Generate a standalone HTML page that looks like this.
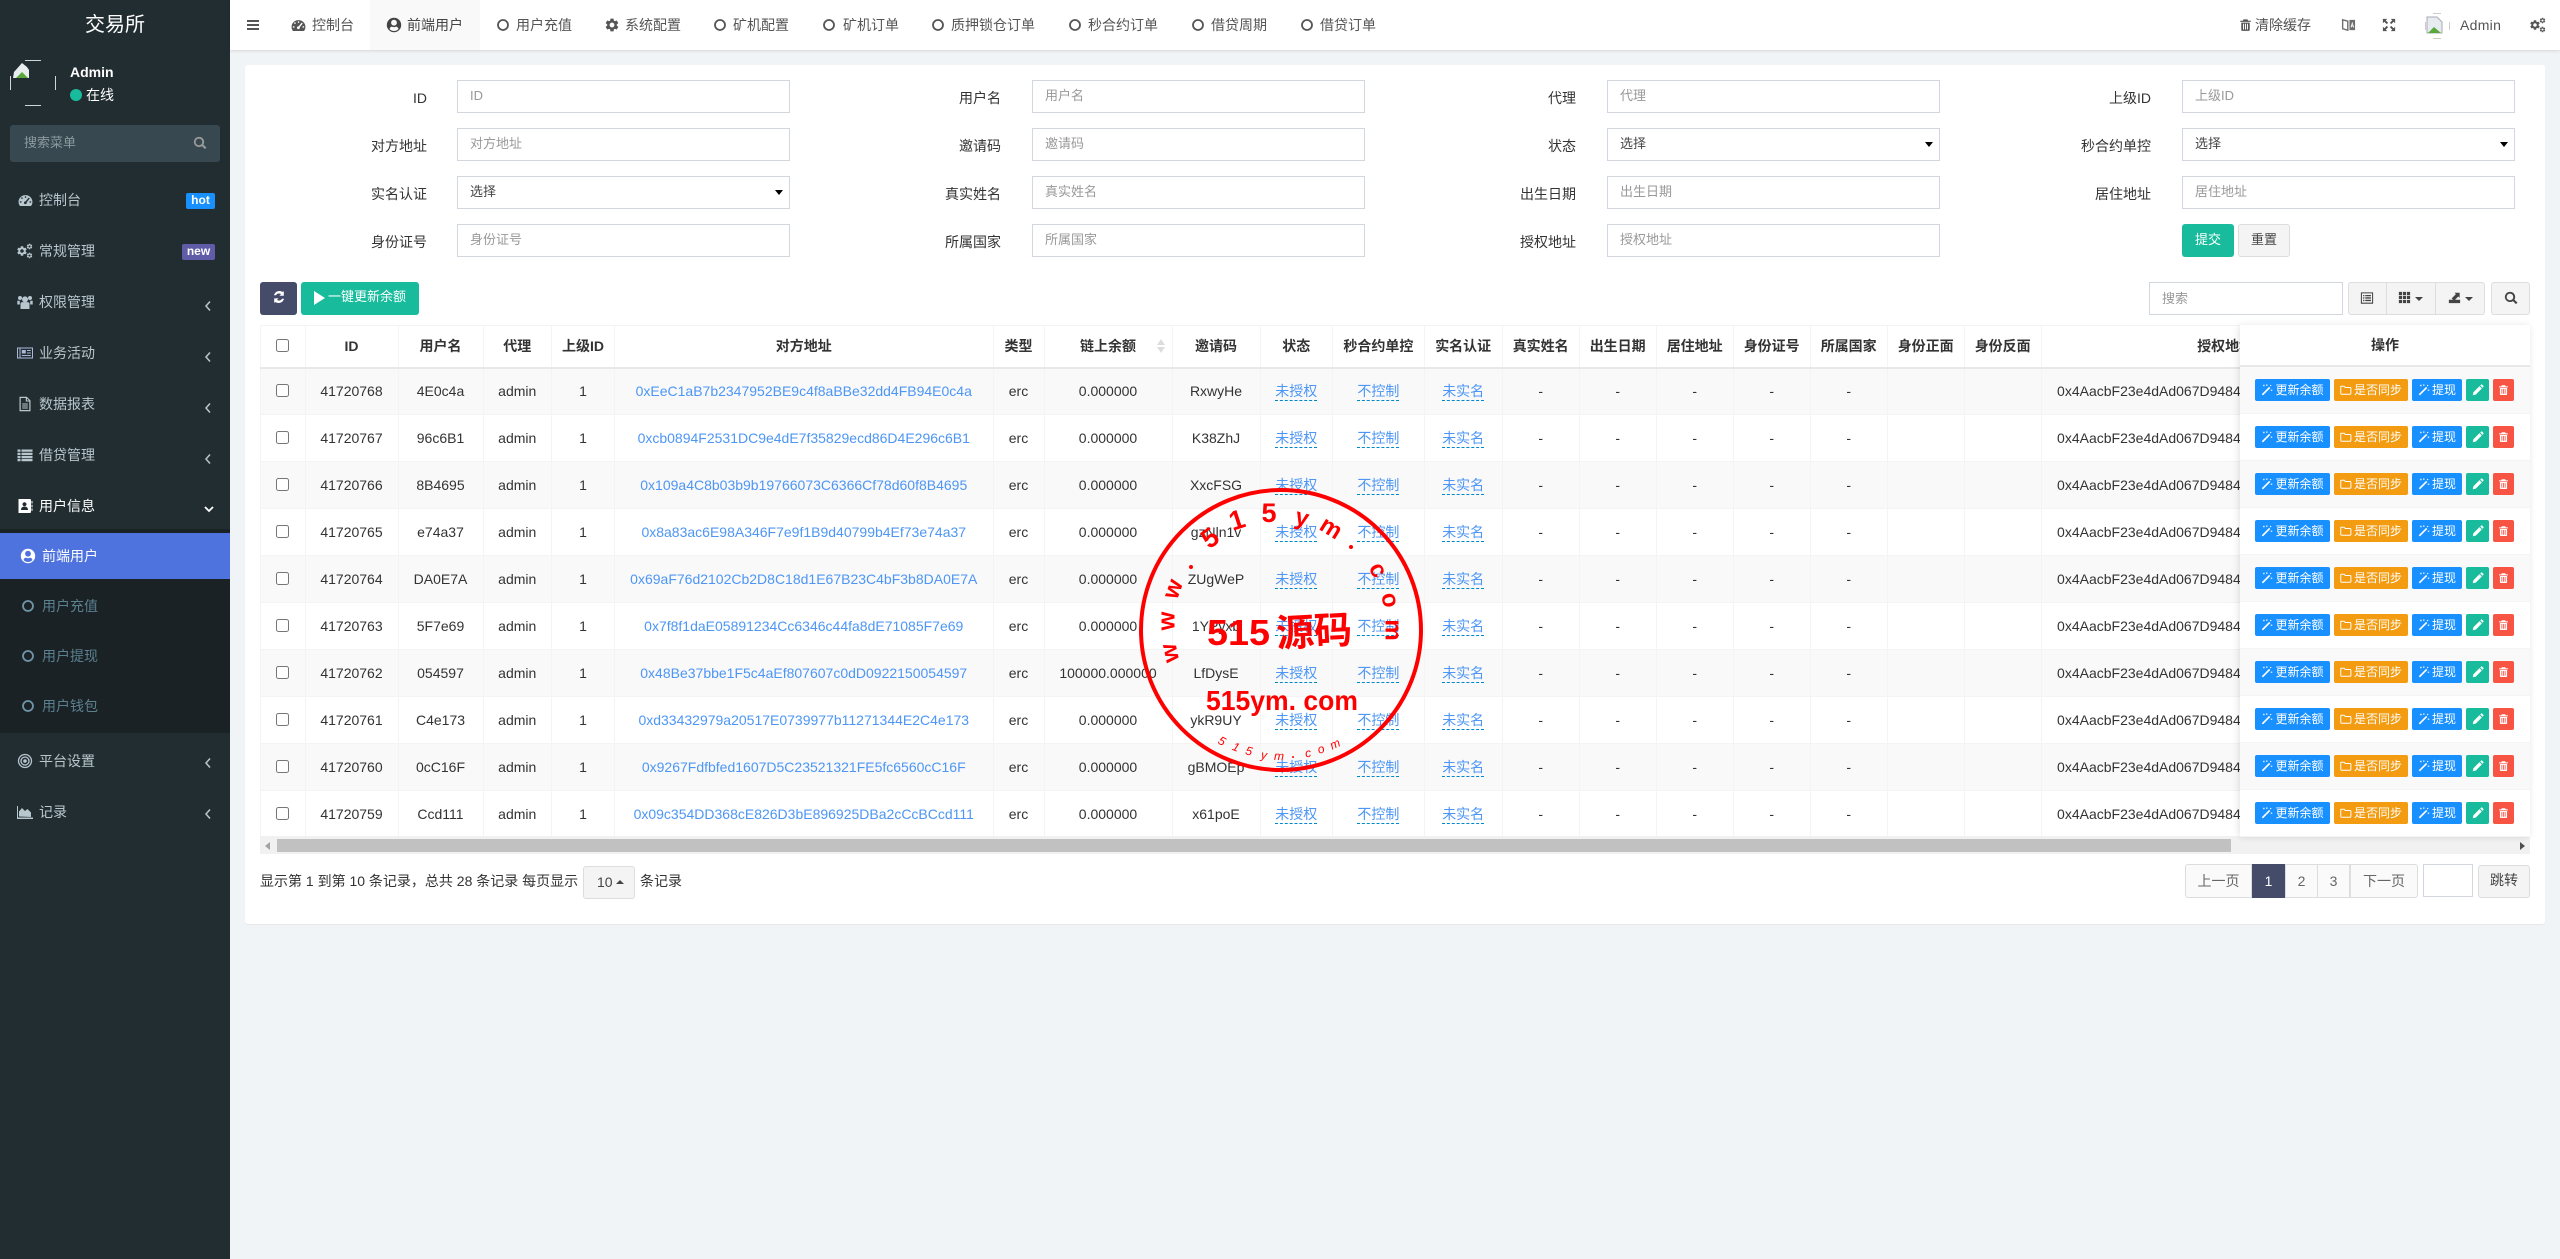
<!DOCTYPE html>
<html><head><meta charset="utf-8"><title>交易所</title>
<style>
*{box-sizing:border-box}
html,body{margin:0;padding:0}
body{width:2560px;height:1259px;overflow:hidden;position:relative;background:#f1f4f6;font:14px/20px "Liberation Sans","Noto Sans CJK SC",sans-serif;color:#333}
.a{position:absolute;white-space:nowrap}
svg{fill:currentColor;display:block}
.ic{position:absolute}
#side{position:absolute;left:0;top:0;width:230px;height:1259px;background:#222d32;color:#b8c7ce}
.mi{position:absolute;left:39px;line-height:20px;white-space:nowrap}
.tab{position:absolute;top:15px;line-height:20px;color:#555;white-space:nowrap}
.lb{position:absolute;width:200px;text-align:right;line-height:20px;color:#333}
.in{position:absolute;height:33px;border:1px solid #d2d6de;background:#fff;padding-left:12px;font-size:13px;line-height:29px;color:#999;white-space:nowrap}
.in.s{color:#444}
.in.s:after{content:"";position:absolute;right:6px;top:13px;border:4px solid transparent;border-top:5px solid #000;border-bottom:0}
#t{position:absolute;left:260px;top:325px;width:2270px;height:511px;overflow:hidden}
table{border-collapse:collapse;table-layout:fixed;width:2438.7px}
th,td{border:1px solid #f4f4f4;text-align:center;padding:0;white-space:nowrap;overflow:hidden;font-weight:400;height:47px;color:#333}
th{height:42px;font-weight:700;border-bottom:2px solid #e8e8e8;background:#fff}
tr:nth-child(odd) td{background:#f9f9f9}
tr:nth-child(even) td{background:#fff}
td.ad{color:#4d96f5}
td u{color:#4d96f5;text-decoration:none;border-bottom:1px dashed #0088cc;padding-bottom:1px}
input[type=checkbox]{margin:0;width:13px;height:13px;vertical-align:middle;position:relative;top:-2px}
#fx{position:absolute;left:2240px;top:325px;width:290px;height:511px;background:#fff;box-shadow:-2px 0 8px rgba(0,0,0,.08),0 2px 6px rgba(0,0,0,.05)}
#fx .h{height:42px;border-bottom:2px solid #e8e8e8;text-align:center;font-weight:700;line-height:41px}
#fx .r{height:47px;border-bottom:1px solid #f4f4f4;position:relative;background:#fff}
#fx .r:nth-child(even){background:#f9f9f9}
.b{position:absolute;top:12px;height:22px;border-radius:2px;color:#fff;font-size:12px;line-height:22px;display:flex;align-items:center;justify-content:center;white-space:nowrap}
.b svg{margin-right:2px}
.b1{left:15px;width:75px;background:#1890ff}
.b2{left:94px;width:74px;background:#f39c12}
.b3{left:172px;width:50px;background:#1890ff}
.b4{left:226px;width:23px;background:#18bc9c}
.b5{left:253px;width:21px;background:#f75444}
.b4 svg,.b5 svg{margin:0}
.btn{position:absolute;border:1px solid #ddd;border-radius:3px;background:#f4f4f4;color:#444;text-align:center}
.pg{position:absolute;top:864px;height:34px;border:1px solid #ddd;background:#fafafa;color:#666;text-align:center;line-height:32px;margin-left:-1px}
</style></head><body>
<svg width="0" height="0" style="position:absolute"><defs>
<symbol id="gear" viewBox="0 0 24 24"><path d="M19.14 12.94c.04-.3.06-.61.06-.94 0-.32-.02-.64-.07-.94l2.03-1.58c.18-.14.23-.41.12-.61l-1.92-3.32c-.12-.22-.37-.29-.59-.22l-2.39.96c-.5-.38-1.03-.7-1.62-.94l-.36-2.54c-.04-.24-.24-.41-.48-.41h-3.84c-.24 0-.43.17-.47.41l-.36 2.54c-.59.24-1.13.57-1.62.94l-2.39-.96c-.22-.08-.47 0-.59.22L2.74 8.87c-.12.21-.08.47.12.61l2.03 1.58c-.05.3-.09.63-.09.94s.02.64.07.94l-2.03 1.58c-.18.14-.23.41-.12.61l1.92 3.32c.12.22.37.29.59.22l2.39-.96c.5.38 1.03.7 1.62.94l.36 2.54c.05.24.24.41.48.41h3.84c.24 0 .44-.17.47-.41l.36-2.54c.59-.24 1.13-.56 1.62-.94l2.39.96c.22.08.47 0 .59-.22l1.92-3.32c.12-.22.07-.47-.12-.61l-2.01-1.58zM12 15.6c-1.98 0-3.6-1.62-3.6-3.6s1.62-3.6 3.6-3.6 3.6 1.62 3.6 3.6-1.62 3.6-3.6 3.6z"/></symbol>
<symbol id="dash" viewBox="0 0 16 16"><path fill-rule="evenodd" d="M8 2.2C3.8 2.2.6 5.4.6 9.4c0 1.6.5 3 1.3 4.2.2.2.4.3.7.3h10.8c.3 0 .5-.1.7-.3.8-1.2 1.3-2.6 1.3-4.2 0-4-3.2-7.2-7.4-7.2zM7.3 3.6h1.4v1.6H7.3zM3.2 5.2l1.2-.8.9 1.3-1.2.8zM2 8.8h1.7v1.4H2zM12.3 8.8H14v1.4h-1.7zM11.5 4.8l1 1-3.2 4.1a1.5 1.5 0 1 1-1.2-1z"/></symbol>
<symbol id="cogs" viewBox="0 0 16 16"><use href="#gear" x="-1" y="2" width="12" height="12"/><use href="#gear" x="9" y="0" width="7" height="7"/><use href="#gear" x="9" y="9" width="7" height="7"/></symbol>
<symbol id="users" viewBox="0 0 16 16"><circle cx="8" cy="5.4" r="3"/><circle cx="3" cy="4" r="2"/><circle cx="13" cy="4" r="2"/><path d="M3.5 9.5c0-1 1-1.4 2-1.4h5c1 0 2 .4 2 1.4V15h-9zM.3 6.800h2.500v3.700H.3zM13.200 6.800h2.500v3.700h-2.500z"/></symbol>
<symbol id="news" viewBox="0 0 16 16"><path fill-rule="evenodd" d="M0 2.500h16v11H0zM1 3.500v9h1.500v-9zM3.500 3.500v9H15v-9zM4.800 5h4v3.500h-4zM10 5h3.800v1H10zM10 7.500h3.800v1H10zM4.800 10h9v1h-9z"/></symbol>
<symbol id="file" viewBox="0 0 16 16"><path fill-rule="evenodd" d="M2.500.8h7.300l3.700 3.700v10.700H2.500zM3.700 2v12h8.600V5.500H8.800V2zM10 2.500v2h2zM5.200 7.500h5.600v1H5.200zM5.200 9.500h5.600v1H5.200zM5.200 11.500h5.600v1H5.200z"/></symbol>
<symbol id="list" viewBox="0 0 16 16"><path d="M.5 2.500h3v2.300h-3zM4.500 2.500h11v2.300h-11zM.5 5.700h3V8h-3zM4.500 5.700h11V8h-11zM.5 8.900h3v2.300h-3zM4.500 8.900h11v2.300h-11zM.5 12h3v2.300h-3zM4.500 12h11v2.300h-11z"/></symbol>
<symbol id="book" viewBox="0 0 16 16"><path fill-rule="evenodd" d="M1.500 1h11.500c.6 0 1 .4 1 1v12c0 .6-.4 1-1 1H1.500zM7.500 4.300a2 2 0 1 0 .01 0zM4 12h7c0-2-1-3.400-3.500-3.400S4 10 4 12z"/><path d="M14.500 3h1v2.500h-1zM14.500 6.700h1v2.500h-1zM14.500 10.400h1v2.500h-1z"/></symbol>
<symbol id="ucirc" viewBox="0 0 16 16"><path fill-rule="evenodd" d="M8 .8a7.200 7.200 0 1 0 0 14.400A7.200 7.200 0 0 0 8 .8zM8 2.800a2.900 2.900 0 1 1-.01 5.800A2.900 2.900 0 0 1 8 2.800zM8 14a6 6 0 0 1-4.500-2c.5-1.500 1.500-2.500 2.500-2.400.6.300 1.200.5 2 .5s1.400-.2 2-.5c1 0 2 .9 2.500 2.400A6 6 0 0 1 8 14z"/></symbol>
<symbol id="ring" viewBox="0 0 16 16"><circle cx="8" cy="8" r="5" fill="none" stroke="currentColor" stroke-width="1.800"/></symbol>
<symbol id="eye" viewBox="0 0 16 16"><circle cx="8" cy="8" r="6.500" fill="none" stroke="currentColor" stroke-width="1.300"/><circle cx="8" cy="8" r="4" fill="none" stroke="currentColor" stroke-width="1.300"/><circle cx="8" cy="8" r="1.800"/></symbol>
<symbol id="area" viewBox="0 0 16 16"><path d="M0 2h1v11.500h15V15H0zM2 12.500V7.500l3-3.500 3 3 2.500-2 3.500 3.500v4.500z"/></symbol>
<symbol id="search" viewBox="0 0 16 16"><path fill-rule="evenodd" d="M6.800 1a5.800 5.800 0 1 0 3.400 10.500l3.500 3.500 1.700-1.700-3.500-3.500A5.800 5.800 0 0 0 6.800 1zM6.800 3a3.800 3.800 0 1 1 0 7.600 3.800 3.800 0 0 1 0-7.600z"/></symbol>
<symbol id="trash" viewBox="0 0 16 16"><path fill-rule="evenodd" d="M5.500 1h5l.8 1.700H14.500v1.500h-13V2.700h3.200zM2.800 5h10.400v9c0 .7-.5 1.200-1.100 1.200H3.900c-.6 0-1.100-.5-1.100-1.200zM5 6.500v7h1.200v-7zM7.400 6.500v7h1.200v-7zM9.800 6.500v7H11v-7z"/></symbol>
<symbol id="magic" viewBox="0 0 16 16"><path d="M1 13.600 10.800 3.800l1.600 1.600L2.600 15.200zM3 1h1.700v2H3zM7 .5h1.500v2H7zM13 7.500h2V9h-2zM12.500 1 14 1.800l-1 1.400-1.200-1z"/></symbol>
<symbol id="folder" viewBox="0 0 16 16"><path fill="none" stroke="currentColor" stroke-width="1.300" d="M1.500 3h4l1.500 1.600h6.500c.6 0 1 .4 1 1v7c0 .6-.4 1-1 1h-11.500c-.6 0-1-.4-1-1V3.600c0-.4.2-.6.500-.6z"/></symbol>
<symbol id="pencil" viewBox="0 0 16 16"><path d="M1 15l.9-4 8.100-8.100 3.100 3.100L5 14.100zM11 2l1.200-1.200c.4-.3.9-.3 1.300 0l1.700 1.700c.3.400.3.900 0 1.300L14 5z"/></symbol>
<symbol id="expand" viewBox="0 0 16 16"><path d="M1 1h5L4.300 2.700 7 5.400 5.400 7 2.700 4.300 1 6zM15 1v5l-1.700-1.700L10.600 7 9 5.400 11.700 2.700 10 1zM1 15v-5l1.700 1.700L5.400 9 7 10.600 4.300 13.300 6 15zM15 15h-5l1.700-1.700L9 10.600 10.600 9l2.700 2.700L15 10z"/></symbol>
<symbol id="lang" viewBox="0 0 16 16"><path fill-rule="evenodd" d="M1 2l7 1.800V15L1 13zM2.500 4v8l4 1V5zM9 3h6v11H9zM12 5l-1.800 6h1.100l.3-1h1l.3 1H14zM11.800 9l.3-1.500.3 1.500z" opacity=".85"/></symbol>
<symbol id="refresh" viewBox="0 0 16 16"><path d="M13.500 1.500v5h-5l1.800-1.800A4 4 0 0 0 4.500 6H2.300a6.200 6.200 0 0 1 9.500-3.800zM2.500 14.500v-5h5l-1.800 1.800a4 4 0 0 0 5.800-1.300h2.200a6.200 6.200 0 0 1-9.500 3.800z"/></symbol>
<symbol id="listalt" viewBox="0 0 16 16"><path fill-rule="evenodd" d="M1 1.500h14v13H1zM2.200 2.700v10.600h11.600V2.700zM3.500 4.500h1.500V6H3.500zM6 4.500h6.500V6H6zM3.500 7.200h1.500v1.500H3.500zM6 7.200h6.500v1.500H6zM3.500 10h1.500v1.500H3.500zM6 10h6.500v1.500H6z"/></symbol>
<symbol id="th" viewBox="0 0 16 16"><path d="M2 2h3.400v3.400H2zM6.300 2h3.400v3.400H6.300zM10.600 2H14v3.400h-3.400zM2 6.300h3.400v3.400H2zM6.300 6.300h3.400v3.400H6.300zM10.600 6.300H14v3.400h-3.400zM2 10.600h3.400V14H2zM6.300 10.600h3.400V14H6.300zM10.600 10.600H14V14h-3.400z"/></symbol>
<symbol id="dl" viewBox="0 0 16 16"><path d="M2 11.500h12V15H2zM5 10l4.500-4.500L8 4h5.500v5.500L12 8l-4.500 4.500z"/></symbol>
<symbol id="left" viewBox="0 0 8 12"><path d="M6 1.500 2 6l4 4.500" fill="none" stroke="currentColor" stroke-width="1.500"/></symbol>
</defs></svg>

<div id="side">
<div class="a" style="left:0;width:230px;text-align:center;top:13px;font-size:20px;line-height:24px;color:#fff">交易所</div>
<svg class="ic" style="left:10px;top:60px" width="46" height="46" viewBox="0 0 46 46"><path d="M15 .5h16M15 45.500h16M.5 16v14M45.500 16v14" fill="none" stroke="#cfd6da" stroke-width="1"/><path d="M3 18 4 12 12 3 17 7 19 10 19 18z" fill="#e8edef"/><path d="M6 18l6-6 6 6z" fill="#5aa83c"/></svg>
<div class="a" style="left:70px;top:62px;font-weight:700;color:#fff">Admin</div>
<div class="a" style="left:70px;top:89px;width:12px;height:12px;border-radius:50%;background:#18bc9c"></div>
<div class="a" style="left:86px;top:85px;color:#fff">在线</div>
<div class="a" style="left:10px;top:125px;width:210px;height:37px;background:#374850;border-radius:3px;padding-left:14px;line-height:35px;font-size:13px;color:#8c9a9f">搜索菜单</div>
<svg class="ic" style="left:193px;top:136px;color:#999" width="14" height="14"><use href="#search"/></svg>

<svg class="ic" style="left:18px;top:193px" width="15" height="15"><use href="#dash"/></svg><div class="mi" style="top:190px">控制台</div>
<div class="a" style="left:186px;top:193px;width:29px;height:16px;background:#1890ff;border-radius:2px;color:#fff;font-size:12px;font-weight:700;text-align:center;line-height:15px">hot</div>
<svg class="ic" style="left:17px;top:243px" width="16" height="16"><use href="#cogs"/></svg><div class="mi" style="top:241px">常规管理</div>
<div class="a" style="left:182px;top:244px;width:33px;height:16px;background:#605ca8;border-radius:2px;color:#fff;font-size:12px;font-weight:700;text-align:center;line-height:15px">new</div>
<svg class="ic" style="left:17px;top:294px" width="16" height="16"><use href="#users"/></svg><div class="mi" style="top:292px">权限管理</div>
<svg class="ic" style="left:204px;top:300px" width="8" height="12"><use href="#left"/></svg>
<svg class="ic" style="left:17px;top:345px;color:#a9b8d8" width="16" height="16"><use href="#news"/></svg><div class="mi" style="top:343px">业务活动</div>
<svg class="ic" style="left:204px;top:351px" width="8" height="12"><use href="#left"/></svg>
<svg class="ic" style="left:17px;top:396px" width="16" height="16"><use href="#file"/></svg><div class="mi" style="top:394px">数据报表</div>
<svg class="ic" style="left:204px;top:402px" width="8" height="12"><use href="#left"/></svg>
<svg class="ic" style="left:17px;top:447px" width="16" height="16"><use href="#list"/></svg><div class="mi" style="top:445px">借贷管理</div>
<svg class="ic" style="left:204px;top:453px" width="8" height="12"><use href="#left"/></svg>
<svg class="ic" style="left:17px;top:498px;color:#fff" width="16" height="16"><use href="#book"/></svg><div class="mi" style="top:496px;color:#fff">用户信息</div>
<svg class="ic" style="left:204px;top:503px;color:#fff" width="10" height="12" viewBox="0 0 10 12"><path d="M1 4l4 4 4-4" fill="none" stroke="currentColor" stroke-width="1.800"/></svg>
<div class="a" style="left:0;top:529px;width:230px;height:204px;background:#1a2226"></div>
<div class="a" style="left:0;top:533px;width:230px;height:46px;background:#4e73df"></div>
<svg class="ic" style="left:20px;top:548px;color:#fff" width="16" height="16"><use href="#ucirc"/></svg><div class="mi" style="left:42px;top:546px;color:#fff">前端用户</div>
<svg class="ic" style="left:20px;top:598px;color:#6f95a8" width="16" height="16"><use href="#ring"/></svg><div class="mi" style="left:42px;top:596px;color:#5b8090">用户充值</div>
<svg class="ic" style="left:20px;top:648px;color:#6f95a8" width="16" height="16"><use href="#ring"/></svg><div class="mi" style="left:42px;top:646px;color:#5b8090">用户提现</div>
<svg class="ic" style="left:20px;top:698px;color:#6f95a8" width="16" height="16"><use href="#ring"/></svg><div class="mi" style="left:42px;top:696px;color:#5b8090">用户钱包</div>
<svg class="ic" style="left:17px;top:753px" width="16" height="16"><use href="#eye"/></svg><div class="mi" style="top:751px">平台设置</div>
<svg class="ic" style="left:204px;top:757px" width="8" height="12"><use href="#left"/></svg>
<svg class="ic" style="left:17px;top:804px" width="16" height="16"><use href="#area"/></svg><div class="mi" style="top:802px">记录</div>
<svg class="ic" style="left:204px;top:808px" width="8" height="12"><use href="#left"/></svg>
</div>

<div class="a" style="left:230px;top:0;width:2330px;height:50px;background:#fff;box-shadow:0 1px 3px rgba(0,0,0,.12)"></div>
<div class="a" style="left:370px;top:0;width:110px;height:50px;background:#f9f9f9"></div>
<svg class="ic" style="left:246px;top:18px;color:#555" width="14" height="14" viewBox="0 0 14 14"><path d="M1 2h12v2H1zM1 6h12v2H1zM1 10h12v2H1z"/></svg>
<svg class="ic" style="left:291px;top:18px;color:#555" width="15" height="15"><use href="#dash"/></svg><div class="tab" style="left:312px">控制台</div>
<svg class="ic" style="left:386px;top:17px;color:#444" width="16" height="16"><use href="#ucirc"/></svg><div class="tab" style="left:407px;color:#444">前端用户</div>
<svg class="ic" style="left:495px;top:17px;color:#555" width="16" height="16"><use href="#ring"/></svg><div class="tab" style="left:516px">用户充值</div>
<svg class="ic" style="left:604px;top:17px;color:#555" width="16" height="16"><use href="#gear"/></svg><div class="tab" style="left:625px">系统配置</div>
<svg class="ic" style="left:712px;top:17px;color:#555" width="16" height="16"><use href="#ring"/></svg><div class="tab" style="left:733px">矿机配置</div>
<svg class="ic" style="left:821px;top:17px;color:#555" width="16" height="16"><use href="#ring"/></svg><div class="tab" style="left:843px">矿机订单</div>
<svg class="ic" style="left:930px;top:17px;color:#555" width="16" height="16"><use href="#ring"/></svg><div class="tab" style="left:951px">质押锁仓订单</div>
<svg class="ic" style="left:1067px;top:17px;color:#555" width="16" height="16"><use href="#ring"/></svg><div class="tab" style="left:1088px">秒合约订单</div>
<svg class="ic" style="left:1190px;top:17px;color:#555" width="16" height="16"><use href="#ring"/></svg><div class="tab" style="left:1211px">借贷周期</div>
<svg class="ic" style="left:1299px;top:17px;color:#555" width="16" height="16"><use href="#ring"/></svg><div class="tab" style="left:1320px">借贷订单</div>
<svg class="ic" style="left:2239px;top:18px;color:#555" width="13" height="14"><use href="#trash"/></svg><div class="tab" style="left:2255px">清除缓存</div>
<svg class="ic" style="left:2341px;top:17px;color:#555" width="15" height="15"><use href="#lang"/></svg>
<svg class="ic" style="left:2382px;top:18px;color:#555" width="14" height="14"><use href="#expand"/></svg>
<svg class="ic" style="left:2425px;top:13px" width="25" height="26" viewBox="0 0 25 26"><path d="M8 .5h8M8 25.500h8M.5 9v8M24.500 9v8" fill="none" stroke="#ccc"/><path d="M2 4h10l5 5v11H2z" fill="#e6ecf0" stroke="#aab"/><path d="M3 20l6-6 7 6z" fill="#5aa83c"/></svg>
<div class="tab" style="left:2460px;letter-spacing:.3px">Admin</div>
<svg class="ic" style="left:2530px;top:17px;color:#555" width="16" height="16"><use href="#cogs"/></svg>

<div class="a" style="left:245px;top:65px;width:2300px;height:859px;background:#fff;border-radius:3px;box-shadow:0 1px 1px rgba(0,0,0,.05)"></div>

<div class="lb" style="left:227px;top:88px">ID</div><div class="in" style="left:457px;top:80px;width:333px">ID</div>
<div class="lb" style="left:801px;top:88px">用户名</div><div class="in" style="left:1032px;top:80px;width:333px">用户名</div>
<div class="lb" style="left:1376px;top:88px">代理</div><div class="in" style="left:1607px;top:80px;width:333px">代理</div>
<div class="lb" style="left:1951px;top:88px">上级ID</div><div class="in" style="left:2182px;top:80px;width:333px">上级ID</div>
<div class="lb" style="left:227px;top:136px">对方地址</div><div class="in" style="left:457px;top:128px;width:333px">对方地址</div>
<div class="lb" style="left:801px;top:136px">邀请码</div><div class="in" style="left:1032px;top:128px;width:333px">邀请码</div>
<div class="lb" style="left:1376px;top:136px">状态</div><div class="in s" style="left:1607px;top:128px;width:333px">选择</div>
<div class="lb" style="left:1951px;top:136px">秒合约单控</div><div class="in s" style="left:2182px;top:128px;width:333px">选择</div>
<div class="lb" style="left:227px;top:184px">实名认证</div><div class="in s" style="left:457px;top:176px;width:333px">选择</div>
<div class="lb" style="left:801px;top:184px">真实姓名</div><div class="in" style="left:1032px;top:176px;width:333px">真实姓名</div>
<div class="lb" style="left:1376px;top:184px">出生日期</div><div class="in" style="left:1607px;top:176px;width:333px">出生日期</div>
<div class="lb" style="left:1951px;top:184px">居住地址</div><div class="in" style="left:2182px;top:176px;width:333px">居住地址</div>
<div class="lb" style="left:227px;top:232px">身份证号</div><div class="in" style="left:457px;top:224px;width:333px">身份证号</div>
<div class="lb" style="left:801px;top:232px">所属国家</div><div class="in" style="left:1032px;top:224px;width:333px">所属国家</div>
<div class="lb" style="left:1376px;top:232px">授权地址</div><div class="in" style="left:1607px;top:224px;width:333px">授权地址</div>
<div class="a" style="left:2182px;top:224px;width:52px;height:33px;background:#18bc9c;border-radius:3px;color:#fff;font-size:13px;line-height:31px;text-align:center">提交</div>
<div class="btn" style="left:2238px;top:224px;width:52px;height:33px;font-size:13px;line-height:29px">重置</div>

<div class="a" style="left:260px;top:282px;width:37px;height:33px;background:#444c69;border-radius:3px"></div>
<svg class="ic" style="left:272px;top:290px;color:#fff" width="14" height="14"><use href="#refresh"/></svg>
<div class="a" style="left:301px;top:282px;width:118px;height:33px;background:#18bc9c;border-radius:3px;color:#fff;font-size:13px;line-height:30px;padding-left:27px">一键更新余额</div>
<svg class="ic" style="left:313px;top:291px;color:#fff" width="12" height="14" viewBox="0 0 12 14"><path d="M1 0l11 7-11 7z"/></svg>

<div class="in" style="left:2149px;top:282px;width:194px;padding-left:12px;line-height:31px">搜索</div>
<div class="btn" style="left:2348px;top:282px;width:39px;height:33px;border-radius:3px 0 0 3px"></div>
<div class="btn" style="left:2386px;top:282px;width:50px;height:33px;border-radius:0"></div>
<div class="btn" style="left:2435px;top:282px;width:50px;height:33px;border-radius:0 3px 3px 0"></div>
<div class="btn" style="left:2491px;top:282px;width:39px;height:33px"></div>
<svg class="ic" style="left:2360px;top:291px;color:#444" width="14" height="14"><use href="#listalt"/></svg>
<svg class="ic" style="left:2397px;top:290px;color:#444" width="15" height="15"><use href="#th"/></svg>
<div class="a" style="left:2415px;top:297px;border:4px solid transparent;border-top:4px solid #444;border-bottom:0"></div>
<svg class="ic" style="left:2447px;top:289px;color:#444" width="15" height="15"><use href="#dl"/></svg>
<div class="a" style="left:2465px;top:297px;border:4px solid transparent;border-top:4px solid #444;border-bottom:0"></div>
<svg class="ic" style="left:2504px;top:291px;color:#444" width="14" height="14"><use href="#search"/></svg>

<div id="t"><table>
<colgroup><col style="width:44.5px"><col style="width:93px"><col style="width:85px"><col style="width:68.5px"><col style="width:63px"><col style="width:378.5px"><col style="width:51px"><col style="width:128px"><col style="width:88px"><col style="width:72.6px"><col style="width:91.6px"><col style="width:78px"><col style="width:77px"><col style="width:77px"><col style="width:77px"><col style="width:77px"><col style="width:77px"><col style="width:77px"><col style="width:77px"><col style="width:368px"><col style="width:290px"></colgroup>
<thead><tr><th><input type="checkbox"></th><th>ID</th><th>用户名</th><th>代理</th><th>上级ID</th><th>对方地址</th><th>类型</th><th>链上余额</th><th>邀请码</th><th>状态</th><th>秒合约单控</th><th>实名认证</th><th>真实姓名</th><th>出生日期</th><th>居住地址</th><th>身份证号</th><th>所属国家</th><th>身份正面</th><th>身份反面</th><th>授权地址</th><th>操作</th></tr></thead>
<tbody>
<tr><td><input type="checkbox"></td><td>41720768</td><td>4E0c4a</td><td>admin</td><td>1</td><td class="ad">0xEeC1aB7b2347952BE9c4f8aBBe32dd4FB94E0c4a</td><td>erc</td><td>0.000000</td><td>RxwyHe</td><td><u>未授权</u></td><td><u>不控制</u></td><td><u>未实名</u></td><td>-</td><td>-</td><td>-</td><td>-</td><td>-</td><td></td><td></td><td>0x4AacbF23e4dAd067D94841F2C5B0d1A3e7f0C2a9</td><td></td></tr>
<tr><td><input type="checkbox"></td><td>41720767</td><td>96c6B1</td><td>admin</td><td>1</td><td class="ad">0xcb0894F2531DC9e4dE7f35829ecd86D4E296c6B1</td><td>erc</td><td>0.000000</td><td>K38ZhJ</td><td><u>未授权</u></td><td><u>不控制</u></td><td><u>未实名</u></td><td>-</td><td>-</td><td>-</td><td>-</td><td>-</td><td></td><td></td><td>0x4AacbF23e4dAd067D94841F2C5B0d1A3e7f0C2a9</td><td></td></tr>
<tr><td><input type="checkbox"></td><td>41720766</td><td>8B4695</td><td>admin</td><td>1</td><td class="ad">0x109a4C8b03b9b19766073C6366Cf78d60f8B4695</td><td>erc</td><td>0.000000</td><td>XxcFSG</td><td><u>未授权</u></td><td><u>不控制</u></td><td><u>未实名</u></td><td>-</td><td>-</td><td>-</td><td>-</td><td>-</td><td></td><td></td><td>0x4AacbF23e4dAd067D94841F2C5B0d1A3e7f0C2a9</td><td></td></tr>
<tr><td><input type="checkbox"></td><td>41720765</td><td>e74a37</td><td>admin</td><td>1</td><td class="ad">0x8a83ac6E98A346F7e9f1B9d40799b4Ef73e74a37</td><td>erc</td><td>0.000000</td><td>gzNln1v</td><td><u>未授权</u></td><td><u>不控制</u></td><td><u>未实名</u></td><td>-</td><td>-</td><td>-</td><td>-</td><td>-</td><td></td><td></td><td>0x4AacbF23e4dAd067D94841F2C5B0d1A3e7f0C2a9</td><td></td></tr>
<tr><td><input type="checkbox"></td><td>41720764</td><td>DA0E7A</td><td>admin</td><td>1</td><td class="ad">0x69aF76d2102Cb2D8C18d1E67B23C4bF3b8DA0E7A</td><td>erc</td><td>0.000000</td><td>ZUgWeP</td><td><u>未授权</u></td><td><u>不控制</u></td><td><u>未实名</u></td><td>-</td><td>-</td><td>-</td><td>-</td><td>-</td><td></td><td></td><td>0x4AacbF23e4dAd067D94841F2C5B0d1A3e7f0C2a9</td><td></td></tr>
<tr><td><input type="checkbox"></td><td>41720763</td><td>5F7e69</td><td>admin</td><td>1</td><td class="ad">0x7f8f1daE05891234Cc6346c44fa8dE71085F7e69</td><td>erc</td><td>0.000000</td><td>1YPyxb</td><td><u>未授权</u></td><td><u>不控制</u></td><td><u>未实名</u></td><td>-</td><td>-</td><td>-</td><td>-</td><td>-</td><td></td><td></td><td>0x4AacbF23e4dAd067D94841F2C5B0d1A3e7f0C2a9</td><td></td></tr>
<tr><td><input type="checkbox"></td><td>41720762</td><td>054597</td><td>admin</td><td>1</td><td class="ad">0x48Be37bbe1F5c4aEf807607c0dD0922150054597</td><td>erc</td><td>100000.000000</td><td>LfDysE</td><td><u>未授权</u></td><td><u>不控制</u></td><td><u>未实名</u></td><td>-</td><td>-</td><td>-</td><td>-</td><td>-</td><td></td><td></td><td>0x4AacbF23e4dAd067D94841F2C5B0d1A3e7f0C2a9</td><td></td></tr>
<tr><td><input type="checkbox"></td><td>41720761</td><td>C4e173</td><td>admin</td><td>1</td><td class="ad">0xd33432979a20517E0739977b11271344E2C4e173</td><td>erc</td><td>0.000000</td><td>ykR9UY</td><td><u>未授权</u></td><td><u>不控制</u></td><td><u>未实名</u></td><td>-</td><td>-</td><td>-</td><td>-</td><td>-</td><td></td><td></td><td>0x4AacbF23e4dAd067D94841F2C5B0d1A3e7f0C2a9</td><td></td></tr>
<tr><td><input type="checkbox"></td><td>41720760</td><td>0cC16F</td><td>admin</td><td>1</td><td class="ad">0x9267Fdfbfed1607D5C23521321FE5fc6560cC16F</td><td>erc</td><td>0.000000</td><td>gBMOEp</td><td><u>未授权</u></td><td><u>不控制</u></td><td><u>未实名</u></td><td>-</td><td>-</td><td>-</td><td>-</td><td>-</td><td></td><td></td><td>0x4AacbF23e4dAd067D94841F2C5B0d1A3e7f0C2a9</td><td></td></tr>
<tr><td><input type="checkbox"></td><td>41720759</td><td>Ccd111</td><td>admin</td><td>1</td><td class="ad">0x09c354DD368cE826D3bE896925DBa2cCcBCcd111</td><td>erc</td><td>0.000000</td><td>x61poE</td><td><u>未授权</u></td><td><u>不控制</u></td><td><u>未实名</u></td><td>-</td><td>-</td><td>-</td><td>-</td><td>-</td><td></td><td></td><td>0x4AacbF23e4dAd067D94841F2C5B0d1A3e7f0C2a9</td><td></td></tr>
</tbody></table></div>

<div class="a" style="left:1157px;top:339px;border:4.5px solid transparent;border-bottom:6px solid #ddd;border-top:0"></div>
<div class="a" style="left:1157px;top:347px;border:4.5px solid transparent;border-top:6px solid #ddd;border-bottom:0"></div>

<div class="a" style="left:260px;top:836px;width:2270px;height:18px;background:#f1f1f1"></div>
<div class="a" style="left:277px;top:839px;width:1954px;height:13px;background:#c1c1c1"></div>
<div class="a" style="left:265px;top:842px;border:4px solid transparent;border-right:5px solid #a3a3a3;border-left:0"></div>
<div class="a" style="left:2520px;top:842px;border:4px solid transparent;border-left:5px solid #505050;border-right:0"></div>

<div id="fx"><div class="h">操作</div>
<div class="r"><a class="b b1"><svg width="12" height="12"><use href="#magic"/></svg>更新余额</a><a class="b b2"><svg width="12" height="12"><use href="#folder"/></svg>是否同步</a><a class="b b3"><svg width="12" height="12"><use href="#magic"/></svg>提现</a><a class="b b4"><svg width="12" height="12"><use href="#pencil"/></svg></a><a class="b b5"><svg width="11" height="12"><use href="#trash"/></svg></a></div>
<div class="r"><a class="b b1"><svg width="12" height="12"><use href="#magic"/></svg>更新余额</a><a class="b b2"><svg width="12" height="12"><use href="#folder"/></svg>是否同步</a><a class="b b3"><svg width="12" height="12"><use href="#magic"/></svg>提现</a><a class="b b4"><svg width="12" height="12"><use href="#pencil"/></svg></a><a class="b b5"><svg width="11" height="12"><use href="#trash"/></svg></a></div>
<div class="r"><a class="b b1"><svg width="12" height="12"><use href="#magic"/></svg>更新余额</a><a class="b b2"><svg width="12" height="12"><use href="#folder"/></svg>是否同步</a><a class="b b3"><svg width="12" height="12"><use href="#magic"/></svg>提现</a><a class="b b4"><svg width="12" height="12"><use href="#pencil"/></svg></a><a class="b b5"><svg width="11" height="12"><use href="#trash"/></svg></a></div>
<div class="r"><a class="b b1"><svg width="12" height="12"><use href="#magic"/></svg>更新余额</a><a class="b b2"><svg width="12" height="12"><use href="#folder"/></svg>是否同步</a><a class="b b3"><svg width="12" height="12"><use href="#magic"/></svg>提现</a><a class="b b4"><svg width="12" height="12"><use href="#pencil"/></svg></a><a class="b b5"><svg width="11" height="12"><use href="#trash"/></svg></a></div>
<div class="r"><a class="b b1"><svg width="12" height="12"><use href="#magic"/></svg>更新余额</a><a class="b b2"><svg width="12" height="12"><use href="#folder"/></svg>是否同步</a><a class="b b3"><svg width="12" height="12"><use href="#magic"/></svg>提现</a><a class="b b4"><svg width="12" height="12"><use href="#pencil"/></svg></a><a class="b b5"><svg width="11" height="12"><use href="#trash"/></svg></a></div>
<div class="r"><a class="b b1"><svg width="12" height="12"><use href="#magic"/></svg>更新余额</a><a class="b b2"><svg width="12" height="12"><use href="#folder"/></svg>是否同步</a><a class="b b3"><svg width="12" height="12"><use href="#magic"/></svg>提现</a><a class="b b4"><svg width="12" height="12"><use href="#pencil"/></svg></a><a class="b b5"><svg width="11" height="12"><use href="#trash"/></svg></a></div>
<div class="r"><a class="b b1"><svg width="12" height="12"><use href="#magic"/></svg>更新余额</a><a class="b b2"><svg width="12" height="12"><use href="#folder"/></svg>是否同步</a><a class="b b3"><svg width="12" height="12"><use href="#magic"/></svg>提现</a><a class="b b4"><svg width="12" height="12"><use href="#pencil"/></svg></a><a class="b b5"><svg width="11" height="12"><use href="#trash"/></svg></a></div>
<div class="r"><a class="b b1"><svg width="12" height="12"><use href="#magic"/></svg>更新余额</a><a class="b b2"><svg width="12" height="12"><use href="#folder"/></svg>是否同步</a><a class="b b3"><svg width="12" height="12"><use href="#magic"/></svg>提现</a><a class="b b4"><svg width="12" height="12"><use href="#pencil"/></svg></a><a class="b b5"><svg width="11" height="12"><use href="#trash"/></svg></a></div>
<div class="r"><a class="b b1"><svg width="12" height="12"><use href="#magic"/></svg>更新余额</a><a class="b b2"><svg width="12" height="12"><use href="#folder"/></svg>是否同步</a><a class="b b3"><svg width="12" height="12"><use href="#magic"/></svg>提现</a><a class="b b4"><svg width="12" height="12"><use href="#pencil"/></svg></a><a class="b b5"><svg width="11" height="12"><use href="#trash"/></svg></a></div>
<div class="r"><a class="b b1"><svg width="12" height="12"><use href="#magic"/></svg>更新余额</a><a class="b b2"><svg width="12" height="12"><use href="#folder"/></svg>是否同步</a><a class="b b3"><svg width="12" height="12"><use href="#magic"/></svg>提现</a><a class="b b4"><svg width="12" height="12"><use href="#pencil"/></svg></a><a class="b b5"><svg width="11" height="12"><use href="#trash"/></svg></a></div>
</div>

<div class="a" style="left:260px;top:871px">显示第 1 到第 10 条记录，总共 28 条记录 每页显示</div>
<div class="btn" style="left:583px;top:866px;width:52px;height:33px;line-height:30px;text-align:left;padding-left:13px">10</div>
<div class="a" style="left:616px;top:880px;border:4px solid transparent;border-bottom:4px solid #444;border-top:0"></div>
<div class="a" style="left:640px;top:871px">条记录</div>

<div class="pg" style="left:2186px;width:67px;border-radius:3px 0 0 3px">上一页</div>
<div class="pg" style="left:2253px;width:33px;background:#444c69;border-color:#444c69;color:#fff">1</div>
<div class="pg" style="left:2286px;width:33px">2</div>
<div class="pg" style="left:2318px;width:33px">3</div>
<div class="pg" style="left:2351px;width:68px;border-radius:0 3px 3px 0">下一页</div>
<div class="in" style="left:2423px;top:864px;width:50px;height:33px"></div>
<div class="btn" style="left:2478px;top:865px;width:52px;height:33px;line-height:29px">跳转</div>

<svg class="ic" style="left:1130px;top:480px;font-family:'Liberation Sans','Noto Sans CJK SC',sans-serif;fill:#f00" width="300" height="300" viewBox="1130 480 300 300">
<circle cx="1281" cy="630" r="140" fill="none" stroke="#f00" stroke-width="4"/>
<g font-weight="700" font-size="24" text-anchor="middle" dominant-baseline="central">
<text transform="translate(1170 653) rotate(-102)">w</text>
<text transform="translate(1167 621) rotate(-90)">w</text>
<text transform="translate(1173 589) rotate(-70)">w</text>
<circle cx="1191" cy="567" r="2"/>
<text font-size="27" transform="translate(1210 538) rotate(-35)">5</text>
<text font-size="27" transform="translate(1237 520) rotate(-18)">1</text>
<text font-size="27" transform="translate(1269 513)">5</text>
<text transform="translate(1302 518) rotate(15)">y</text>
<text transform="translate(1331 528) rotate(32)">m</text>
<circle cx="1351" cy="547" r="2"/>
<text transform="translate(1378 570) rotate(62)">c</text>
<text transform="translate(1390 600) rotate(78)">o</text>
<text transform="translate(1393 630) rotate(90)">m</text>
</g>
<text x="1207" y="645" font-size="36" font-weight="700" textLength="63" lengthAdjust="spacingAndGlyphs">515</text>
<text x="1276" y="645" font-size="38" font-weight="700" transform="rotate(-3 1310 630)">源码</text>
<text x="1206" y="710" font-size="28" font-weight="700" textLength="152" lengthAdjust="spacingAndGlyphs">515ym. com</text>
<g font-size="12" text-anchor="middle" dominant-baseline="central" font-style="italic">
<text transform="translate(1222 741) rotate(28)">5</text>
<text transform="translate(1236 747) rotate(22)">1</text>
<text transform="translate(1249 751) rotate(14)">5</text>
<text transform="translate(1264 755) rotate(8)">y</text>
<text transform="translate(1279 756) rotate(2)">m</text>
<circle cx="1293" cy="757" r="1"/>
<text transform="translate(1308 753) rotate(-10)">c</text>
<text transform="translate(1321 749) rotate(-18)">o</text>
<text transform="translate(1335 744) rotate(-25)">m</text>
</g>
</svg>
</body></html>
